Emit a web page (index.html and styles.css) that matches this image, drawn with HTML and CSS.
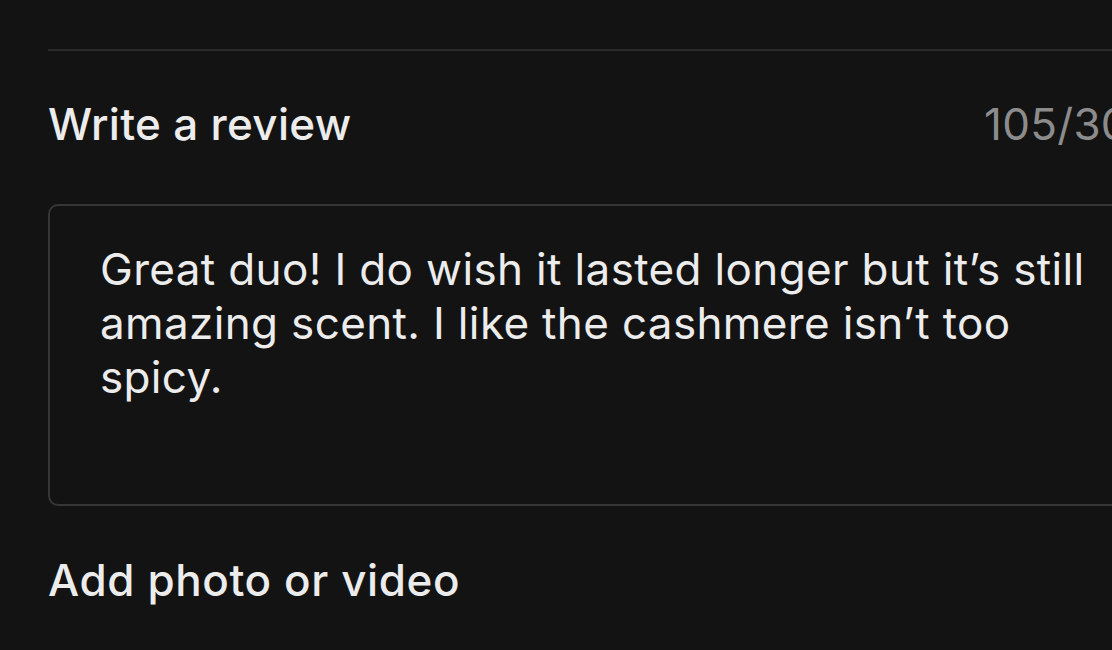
FILE: index.html
```html
<!DOCTYPE html>
<html>
<head>
<meta charset="utf-8">
<link rel="stylesheet" href="styles.css">
</head>
<body>
<div class="page">
  <div class="divider"></div>
  <div class="review-head">
    <h2 class="title">Write a review</h2>
    <span class="counter">105/300</span>
  </div>
  <div class="textbox">Great duo! I do wish it lasted longer but it’s still amazing scent. I like the cashmere isn’t too spicy.</div>
  <h2 class="title media">Add photo or video</h2>
</div>
</body>
</html>
```
FILE: styles.css
```css
html, body {
  margin: 0;
  padding: 0;
  background: #131313;
  overflow: hidden;
}
body {
  width: 1112px;
  height: 650px;
  font-family: Inter, "Noto Sans", sans-serif;
  color: #ececec;
}
.page {
  width: 1109px;
  padding: 49px 0 0 48px;
}
.divider {
  height: 2px;
  background: #2a2a2a;
}
.review-head {
  display: flex;
  justify-content: space-between;
  align-items: baseline;
  margin-top: 49px;
}
.title {
  margin: 0;
  font-size: 44px;
  font-weight: 500;
  line-height: 48px;
  letter-spacing: 0.3px;
}
.counter {
  font-size: 44px;
  color: #8c8c8c;
  line-height: 48px;
  letter-spacing: 0.3px;
}
.textbox {
  margin-top: 56px;
  box-sizing: border-box;
  height: 302px;
  border: 2px solid #363636;
  border-radius: 10px;
  padding: 36px 10px 0 50px;
  font-size: 44px;
  line-height: 54px;
  letter-spacing: 0.35px;
}
.media {
  margin-top: 50px;
  letter-spacing: 0.6px;
}
```
